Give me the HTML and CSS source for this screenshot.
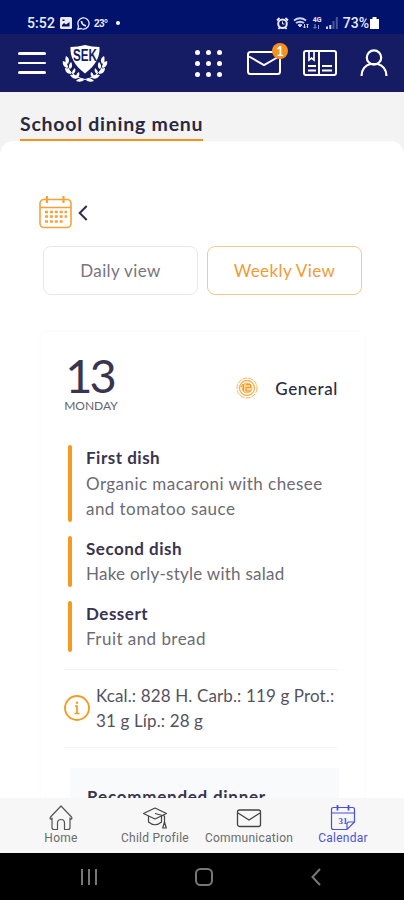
FILE: index.html
```html
<!DOCTYPE html>
<html lang="en">

<head>
    <meta charset="UTF-8">
    <meta name="viewport" content="width=device-width, initial-scale=1.0">
    <title>School dining menu</title>
    <link rel="stylesheet" href="styles.css">
</head>

<body>
    <div class="status-bar">
        <span class="time">5:52</span>
        <svg class="status-image" width="12" height="12" viewBox="0 0 12 12">
            <rect width="12" height="12" rx="1.5" fill="#e8ebff"/>
            <path d="M2 9.5V8l2-2 2 1.5L9.500 5v4.500zM2.500 2.500h2v1.500h-2z" fill="#00126b"/>
        </svg>
        <svg class="status-chat" width="13" height="13" viewBox="0 0 13 13" fill="none" stroke="#e8ebff" stroke-width="1.300">
            <path d="M.8 12.200l.8-3A5.600 5.600 0 1 1 4 11.500z"/>
            <path d="M4.500 4c0 2.500 2 4.500 4.500 4.800" stroke-width="1.800"/>
        </svg>
        <span class="temp">23°</span>
        <span class="status-dot"></span>
        <div class="status-right">
            <svg width="13" height="13" viewBox="0 0 13 13" fill="none" stroke="#e8ebff">
                <circle cx="6.500" cy="6.800" r="4.300" stroke-width="2"/>
                <path d="M1 3.500L3.500 1M12 3.500L9.500 1M2.500 12l1.500-2M10.500 12L9 10" stroke-width="1.800"/>
                <path d="M6.500 4.500v2.500h2"/>
            </svg>
            <svg width="16" height="12" viewBox="0 0 16 12" fill="none" stroke="#cdd2f0">
                <path d="M1 3.500c4-3 8-3 12 0M3 6c3-2 5-2 8 0" stroke-width="2"/>
                <path d="M5 8c1.500-1 3-1 4 0L7 10z" fill="#cdd2f0"/>
                <path d="M11.500 7v4M10 9.500l1.500 1.500L13 9.500M14.500 11V7M13.500 8l1-1 1 1"/>
            </svg>
            <div class="network">
                <span>4G</span>
                <svg width="7" height="5" viewBox="0 0 7 5" fill="none" stroke="#8f98cf">
                    <path d="M2 0v4M.5 3L2 4.500 3.500 3M5.500 5V1"/>
                </svg>
            </div>
            <svg width="12" height="12" viewBox="0 0 12 12">
                <path d="M0 9.500h2V12H0zM3.300 8h2v4h-2z" fill="#d5d9f5"/>
                <path d="M6.500 4h2v8h-2zM9.800 0h2v12h-2z" fill="#4b5798"/>
            </svg>
            <span class="battery-text">73%</span>
            <svg class="battery" width="9" height="12" viewBox="0 0 9 12" fill="#fff">
                <path d="M2.500 0h4v2H9v10H0V2h2.500z"/>
            </svg>
        </div>
    </div>

    <header class="header">
        <div class="menu-button"><span></span><span></span><span></span></div>

        <svg class="crest" width="46" height="38" viewBox="0 0 46 38">
            <path d="M8.500 3Q16 3 23 1q7 2 14.500 2C38 13 34 21 23 29.500 12 21 8 13 8.500 3z" fill="#fff"/>
            <text x="23" y="17" class="crest-text" text-anchor="middle" textLength="24" lengthAdjust="spacingAndGlyphs">SEK</text>
            <g fill="none" stroke="#fff">
                <path d="M4 17c1 9 7 16 19 18.500M42 17c-1 9-7 16-19 18.500"/>
            </g>
            <g fill="#fff">
                <path d="M4 12c3 2 4 4 2 8-3-2-3-5-2-8zM1 17c4 1 5 4 4 7-3-1-5-4-4-7zM9 18c2 3 1 6-1 7-2-2-1-5 1-7zM3 24c4 0 6 3 6 6-4 0-6-3-6-6zM13 24c1 3 0 5-2 6-2-2 0-4 2-6zM8 31c4-1 7 0 8 3-3 2-6 0-8-3zM17 28c1 3 0 5-2 6-2-2 0-5 2-6zM14 37c3-3 6-3 8-1-2 2-5 2-8 1z"/>
                <path d="M42 12c-3 2-4 4-2 8 3-2 3-5 2-8zM45 17c-4 1-5 4-4 7 3-1 5-4 4-7zM37 18c-2 3-1 6 1 7 2-2 1-5-1-7zM43 24c-4 0-6 3-6 6 4 0 6-3 6-6zM33 24c-1 3 0 5 2 6 2-2 0-4-2-6zM38 31c-4-1-7 0-8 3 3 2 6 0 8-3zM29 28c-1 3 0 5 2 6 2-2 0-5-2-6zM32 37c-3-3-6-3-8-1 2 2 5 2 8 1z"/>
            </g>
        </svg>

        <div class="apps">
            <span></span><span></span><span></span>
            <span></span><span></span><span></span>
            <span></span><span></span><span></span>
        </div>

        <div class="mail">
            <svg width="34" height="24" viewBox="0 0 34 24" fill="none" stroke="#fff" stroke-width="2">
                <rect x="1" y="1" width="32" height="22" rx="2.500"/>
                <path d="M2 5.500l15 8.500 15-8.500"/>
            </svg>
            <span class="badge">1</span>
        </div>

        <svg class="book" width="34" height="26" viewBox="0 0 34 26" fill="none" stroke="#fff" stroke-width="2">
            <rect x="1" y="1" width="32" height="24" rx="2"/>
            <path d="M16 1v24"/>
            <path d="M6 2v8l2.500-2 2.500 2V2" stroke-width="1.700"/>
            <path d="M5 16h8M5 20.500h8M19 16h10M19 20.500h10" stroke-width="2"/>
        </svg>

        <svg class="person" width="28" height="28" viewBox="0 0 28 28" fill="none" stroke="#fff" stroke-width="2.200">
            <circle cx="14" cy="8.500" r="7.200"/>
            <path d="M1.500 27c0-6.500 4-11 9-12h7c5 1 9 5.500 9 12"/>
        </svg>
    </header>

    <div class="title-bar">
        <h1>School dining menu</h1>
    </div>

    <main class="content">
        <div class="week-picker">
            <svg width="33" height="33" viewBox="0 0 33 33" fill="none" stroke="#f6a13a" stroke-width="1.600">
                <rect x="1" y="3.500" width="31" height="28" rx="4"/>
                <path d="M1 11.500h31" stroke-width="1.300"/>
                <path d="M8 0v7M24.500 0v7" stroke-width="2.200"/>
                <path d="M6 16h22M6 20.500h22M6 25.500h18" stroke-width="2.500" stroke-dasharray="3 1.900"/>
            </svg>
            <svg class="prev" width="10" height="16" viewBox="0 0 10 16" fill="none" stroke="#302c50" stroke-width="2">
                <path d="M8.700 1L1.700 8l7 7"/>
            </svg>
        </div>

        <div class="view-switch">
            <button class="view-button">Daily view</button>
            <button class="view-button active">Weekly View</button>
        </div>

        <section class="day-card">
            <div class="day-header">
                <div class="date">
                    <span class="day-number">13</span>
                    <span class="day-name">MONDAY</span>
                </div>
                <div class="menu-type">
                    <svg width="22" height="22" viewBox="0 0 22 22" fill="none" stroke="#f6b255">
                        <circle cx="11" cy="11" r="10" stroke-dasharray="5 1"/>
                        <circle cx="11" cy="11" r="7.500" stroke-width="1.300"/>
                        <circle cx="11" cy="11" r="5" fill="#fbd296"/>
                        <path d="M7.500 7v7M10 7.500h4.500v3H10v3.500h5M5 10l2-3" stroke="#ee9a2c"/>
                    </svg>
                    <span>General</span>
                </div>
            </div>

            <div class="dishes">
                <div class="dish">
                    <h2>First dish</h2>
                    <p>Organic macaroni with chesee<br>and tomatoo sauce</p>
                </div>
                <div class="dish">
                    <h2>Second dish</h2>
                    <p class="compact">Hake orly-style with salad</p>
                </div>
                <div class="dish">
                    <h2>Dessert</h2>
                    <p>Fruit and bread</p>
                </div>
            </div>

            <div class="nutrition">
                <svg width="26" height="26" viewBox="0 0 26 26" fill="none" stroke="#f6991f" stroke-width="1.800">
                    <circle cx="13" cy="13" r="12"/>
                    <path d="M11 11h2v7M10.500 18.500h5" stroke-width="1.700"/>
                    <circle cx="13" cy="7.700" r="1.200" fill="#f6991f" stroke="none"/>
                </svg>
                <p>Kcal.: 828 H. Carb.: 119 g Prot.:<br>31 g Líp.: 28 g</p>
            </div>

            <div class="dinner">
                <h2>Recommended dinner</h2>
            </div>
        </section>
    </main>

    <nav class="tab-bar">
        <a class="tab">
            <svg width="26" height="26" viewBox="0 0 26 26" fill="none" stroke="#555" stroke-width="1.200" stroke-linejoin="round">
                <path d="M4 12.500v10Q4 24.500 6 24.500h3.500V18a3 3 0 0 1 7 0v6.500H20q2 0 2-2v-10M4 14.500q-3-.5-1.500-2.500L13 1l10.500 11q1.500 2-1.500 2.500"/>
            </svg>
            <span>Home</span>
        </a>
        <a class="tab">
            <svg width="26" height="26" viewBox="0 0 26 26" fill="none" stroke="#444" stroke-width="1.200" stroke-linejoin="round">
                <path d="M1.500 8.500L13 3l11.500 5.500L13 14z"/>
                <path d="M6.500 11v6q6.500 5.500 13 0v-6M13 8.500l9.500 2.500v7"/>
                <path d="M22.500 17l-1.800 6h3.600z"/>
            </svg>
            <span>Child Profile</span>
        </a>
        <a class="tab">
            <svg width="26" height="26" viewBox="0 0 26 26" fill="none" stroke="#444" stroke-width="1.300">
                <rect x="1.500" y="5" width="23" height="16.500" rx="2"/>
                <path d="M2 8l11 7 11-7"/>
            </svg>
            <span>Communication</span>
        </a>
        <a class="tab active">
            <svg width="26" height="26" viewBox="0 0 26 26" fill="none" stroke="#4c51db" stroke-width="1.200">
                <path d="M24.500 17V4.500q0-2-2-2h-19q-2 0-2 2v18q0 2 2 2H17zM17 24.500V19q0-2 2-2h5.500M1.500 8h23"/>
                <path d="M7.500 0v5.500M18.500 0v5.500" stroke-width="1.800"/>
                <text x="13" y="18.500" class="calendar-day" text-anchor="middle">31</text>
            </svg>
            <span>Calendar</span>
        </a>
    </nav>

    <div class="system-nav">
        <svg class="recents" width="16" height="18" viewBox="0 0 16 18" stroke="#777" stroke-width="2">
            <path d="M1 1v16M8 1v16M15 1v16"/>
        </svg>
        <svg class="home-key" width="18" height="18" viewBox="0 0 18 18" fill="none" stroke="#777" stroke-width="2">
            <rect x="1" y="1" width="16" height="16" rx="4.500"/>
        </svg>
        <svg class="back" width="10" height="18" viewBox="0 0 10 18" fill="none" stroke="#777" stroke-width="2">
            <path d="M9 1L1.500 9 9 17"/>
        </svg>
    </div>
</body>

</html>
```
FILE: styles.css
```css
* {
    margin: 0;
    padding: 0;
    box-sizing: border-box;
}

body {
    font-family: Lato, "Open Sans", sans-serif;
    background-color: #f3f3f4;
    width: 404px;
    height: 900px;
    display: flex;
    flex-direction: column;
    overflow: hidden;
}

svg {
    display: block;
    flex-shrink: 0;
}

.status-bar {
    height: 34px;
    flex-shrink: 0;
    background: #00126b;
    color: #e8ebff;
    display: flex;
    align-items: center;
    padding: 12px 25px 0 27px;
    font-family: Roboto, sans-serif;
    font-size: 14px;
    font-weight: 500;
}

.time {
    width: 33px;
    letter-spacing: 0.1px;
}

.status-chat {
    margin-left: 5px;
}

.temp {
    width: 15px;
    margin-left: 4px;
    font-family: "Liberation Sans", sans-serif;
    font-size: 10px;
    font-weight: bold;
    letter-spacing: -0.5px;
}

.status-dot {
    width: 4px;
    height: 4px;
    margin-left: 7px;
    border-radius: 50%;
    background: #fff;
}

.status-right {
    display: flex;
    align-items: center;
    gap: 4px;
    margin-left: auto;
}

.network {
    width: 9px;
    font-size: 7px;
    line-height: 7px;
    font-weight: bold;
}

.battery-text {
    margin-left: 1px;
}

.battery {
    margin-left: -3px;
}

.header {
    height: 58px;
    flex-shrink: 0;
    background: #161c64;
    display: flex;
    align-items: center;
    padding: 0 16px 0 18px;
}

.menu-button {
    width: 28px;
    display: flex;
    flex-direction: column;
    gap: 7px;
}

.menu-button span {
    height: 2.500px;
    border-radius: 2px;
    background: #fff;
}

.crest {
    margin-left: 16px;
    overflow: visible;
}

.crest-text {
    font-family: "Liberation Sans", sans-serif;
    font-size: 16px;
    font-weight: bold;
    fill: #161c64;
}

.apps {
    display: grid;
    grid-template-columns: repeat(3, 5px);
    gap: 6px;
    margin-left: 87px;
}

.apps span {
    width: 5px;
    height: 5px;
    border-radius: 50%;
    background: #fff;
}

.mail {
    position: relative;
    margin-left: 25px;
}

.badge {
    position: absolute;
    top: -8px;
    right: -7px;
    width: 16px;
    height: 16px;
    border-radius: 50%;
    background: #f6911e;
    color: #fff;
    font-size: 13px;
    font-weight: bold;
    line-height: 16px;
    text-align: center;
}

.book {
    margin-left: 22px;
}

.person {
    margin-left: auto;
}

.title-bar {
    height: 49px;
    flex-shrink: 0;
    padding: 17px 20px 0;
}

.title-bar h1 {
    width: 183px;
    height: 32px;
    border-bottom: 2px solid #f6911e;
    color: #2b2940;
    font-size: 19.500px;
    font-weight: 700;
    line-height: 29px;
    letter-spacing: 0.750px;
    white-space: nowrap;
}

.content {
    height: 657px;
    flex-shrink: 0;
    background: #fff;
    border-radius: 14px 14px 0 0;
    padding: 55px 41px 0;
    overflow: hidden;
}

.week-picker {
    display: flex;
    align-items: center;
    margin-left: -2px;
}

.prev {
    margin-left: 6px;
}

.view-switch {
    display: flex;
    gap: 9px;
    margin: 17px 0 0 2px;
}

.view-button {
    width: 155px;
    height: 49px;
    border: 1.500px solid #e8e8e8;
    border-radius: 8px;
    background: #fff;
    color: #77757d;
    font-family: inherit;
    font-size: 17px;
    letter-spacing: 0.400px;
}

.view-button.active {
    border-color: #f5c98b;
    color: #f39a35;
}

.day-card {
    width: 323px;
    height: 600px;
    margin-top: 37px;
    padding: 18px 26px 0 23px;
    border-radius: 6px;
    box-shadow: 0 0 3px rgba(0, 0, 0, 0.04);
}

.day-header {
    height: 95px;
    display: flex;
    justify-content: space-between;
}

.date {
    display: flex;
    flex-direction: column;
    align-items: center;
    width: 54px;
}

.day-number {
    margin: 4px 3px 3px 0;
    color: #39344f;
    font-size: 47px;
    line-height: 42px;
    letter-spacing: -3px;
}

.day-name {
    color: #66636e;
    font-size: 12px;
    line-height: 14px;
}

.menu-type {
    display: flex;
    align-items: center;
    gap: 17px;
    height: 76px;
    color: #2b2940;
    font-size: 17px;
    font-weight: 500;
    letter-spacing: 0.600px;
}

.dishes {
    display: flex;
    flex-direction: column;
    gap: 14px;
    margin-left: 3px;
}

.dish {
    position: relative;
    padding-left: 19px;
    line-height: 25.500px;
}

/* orange bar on the left of every dish */
.dish::before {
    content: "";
    position: absolute;
    left: 1px;
    top: 0;
    bottom: 0;
    width: 4px;
    border-radius: 2px;
    background: #f6991f;
}

.dish h2,
.dinner h2 {
    color: #39344f;
    font-size: 17px;
    font-weight: 700;
    letter-spacing: 0.500px;
    line-height: 25.500px;
}

.dish p {
    color: #6d6a73;
    font-size: 17px;
    letter-spacing: 0.450px;
    white-space: nowrap;
}

.dish .compact {
    letter-spacing: 0.250px;
}

.nutrition {
    height: 79px;
    margin-top: 17px;
    border-top: 1px solid #f4f4f4;
    border-bottom: 1px solid #f4f4f4;
    display: flex;
    align-items: center;
    gap: 6px;
    color: #55525e;
    font-size: 17px;
    line-height: 25.500px;
    letter-spacing: 0.130px;
    white-space: nowrap;
}

.dinner {
    height: 120px;
    margin: 20px -1px 0 6px;
    padding: 16px 17px;
    background: #f8fafb;
}

.dinner h2 {
    letter-spacing: 0.750px;
}

.tab-bar {
    height: 55px;
    flex-shrink: 0;
    background: #f7f7f7;
    display: grid;
    grid-template-columns: 94px 94px 94px 94px;
    padding: 7px 0 0 14px;
    font-family: Roboto, sans-serif;
}

.tab {
    display: flex;
    flex-direction: column;
    align-items: center;
    color: #6b6b6b;
    font-size: 12px;
    line-height: 15px;
    letter-spacing: 0.250px;
    white-space: nowrap;
}

.tab.active {
    color: #4c51db;
}

.calendar-day {
    font-family: "Liberation Serif", serif;
    font-size: 9px;
    font-weight: bold;
    letter-spacing: 0;
    fill: #4c51db;
    stroke: none;
}

.system-nav {
    height: 47px;
    flex-shrink: 0;
    background: #000;
    display: flex;
    align-items: center;
    justify-content: space-between;
    padding: 0 83px 0 81px;
}
```
